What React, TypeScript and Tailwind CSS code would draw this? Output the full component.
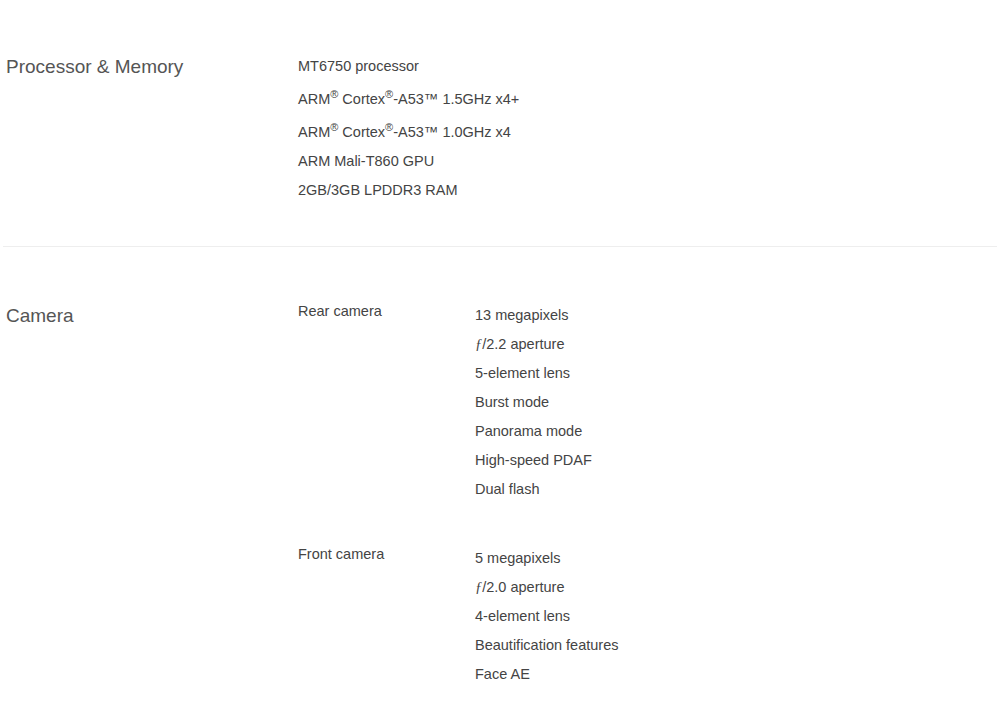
const processor = [
  { text: 'MT6750 processor' },
  { text: 'cortex15', sup: true },
  { text: 'cortex10', sup: true },
  { text: 'ARM Mali-T860 GPU' },
  { text: '2GB/3GB LPDDR3 RAM' },
];

const cameras = [
  {
    label: 'Rear camera',
    items: ['13 megapixels', 'f/2.2 aperture', '5-element lens', 'Burst mode', 'Panorama mode', 'High-speed PDAF', 'Dual flash'],
  },
  {
    label: 'Front camera',
    items: ['5 megapixels', 'f/2.0 aperture', '4-element lens', 'Beautification features', 'Face AE'],
  },
];

function Cortex({ speed }: { speed: string }) {
  return (
    <>
      ARM<sup className="text-[11px] -top-[6px]">®</sup> Cortex<sup className="text-[11px] -top-[6px]">®</sup>-A53™ {speed}
    </>
  );
}

function Item({ text }: { text: string }) {
  if (text.startsWith('f/')) {
    return (
      <>
        <span className="italic" style={{ fontFamily: '"Liberation Serif", serif' }}>ƒ</span>
        {text.slice(1)}
      </>
    );
  }
  return <>{text}</>;
}

export default function App() {
  return (
    <div className="w-[1000px] h-[702px] bg-white text-[#444] overflow-hidden" style={{ fontFamily: '"Liberation Sans", Arial, sans-serif' }}>
      <div className="px-[3px]">
        <section className="flex pt-[52px] pb-[41px]">
          <h2 className="w-[295px] shrink-0 pl-[3px] text-[19px] leading-[29px] text-[#555]">Processor &amp; Memory</h2>
          <div className="text-[14.5px]">
            {processor.map((p) => (
              <div key={p.text} className={p.sup ? 'leading-[29px] pt-[4px]' : 'leading-[29px]'}>
                {p.text === 'cortex15' ? <Cortex speed="1.5GHz x4+" /> : p.text === 'cortex10' ? <Cortex speed="1.0GHz x4" /> : p.text}
              </div>
            ))}
          </div>
        </section>

        <div className="h-px bg-[#eeeeee]" />

        <section className="flex pt-[50px]">
          <h2 className="w-[295px] shrink-0 pl-[3px] pt-[4px] text-[19px] leading-[29px] text-[#555]">Camera</h2>
          <div className="flex flex-col gap-[36px] text-[14.5px]">
            {cameras.map((c) => (
              <div key={c.label} className="flex">
                <div className="w-[177px] shrink-0 leading-[29px]">{c.label}</div>
                <div className="pt-[4px]">
                  {c.items.map((i) => (
                    <div key={i} className="leading-[29px]">
                      <Item text={i} />
                    </div>
                  ))}
                </div>
              </div>
            ))}
          </div>
        </section>
      </div>
    </div>
  );
}
